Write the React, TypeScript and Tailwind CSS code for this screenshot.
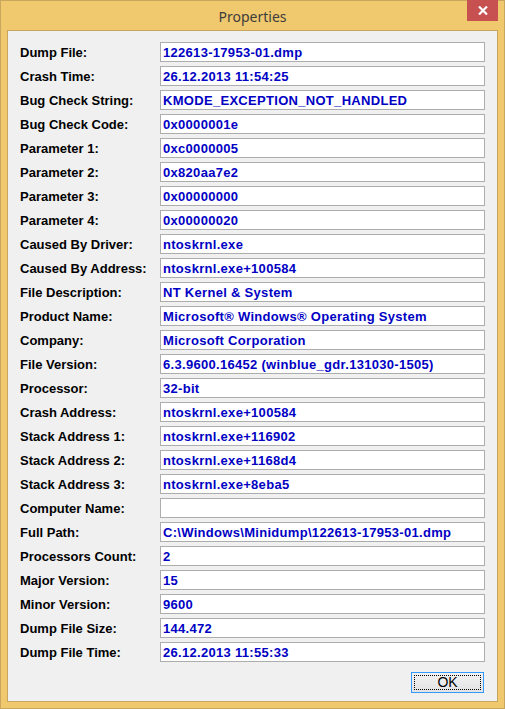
import React from 'react'

const rows: [string, string][] = [
  ['Dump File:', '122613-17953-01.dmp'],
  ['Crash Time:', '26.12.2013 11:54:25'],
  ['Bug Check String:', 'KMODE_EXCEPTION_NOT_HANDLED'],
  ['Bug Check Code:', '0x0000001e'],
  ['Parameter 1:', '0xc0000005'],
  ['Parameter 2:', '0x820aa7e2'],
  ['Parameter 3:', '0x00000000'],
  ['Parameter 4:', '0x00000020'],
  ['Caused By Driver:', 'ntoskrnl.exe'],
  ['Caused By Address:', 'ntoskrnl.exe+100584'],
  ['File Description:', 'NT Kernel & System'],
  ['Product Name:', 'Microsoft® Windows® Operating System'],
  ['Company:', 'Microsoft Corporation'],
  ['File Version:', '6.3.9600.16452 (winblue_gdr.131030-1505)'],
  ['Processor:', '32-bit'],
  ['Crash Address:', 'ntoskrnl.exe+100584'],
  ['Stack Address 1:', 'ntoskrnl.exe+116902'],
  ['Stack Address 2:', 'ntoskrnl.exe+1168d4'],
  ['Stack Address 3:', 'ntoskrnl.exe+8eba5'],
  ['Computer Name:', ''],
  ['Full Path:', 'C:\\Windows\\Minidump\\122613-17953-01.dmp'],
  ['Processors Count:', '2'],
  ['Major Version:', '15'],
  ['Minor Version:', '9600'],
  ['Dump File Size:', '144.472'],
  ['Dump File Time:', '26.12.2013 11:55:33'],
]

const PropRow: React.FC<{ label: string; value: string }> = ({ label, value }) => (
  <div className="flex h-[20px] items-center">
    <div className="w-[140px] pt-[1px] text-[13px] font-bold text-black">{label}</div>
    <div className="flex h-[20px] flex-1 items-center overflow-hidden whitespace-nowrap border border-[#adadad] bg-white pl-[2px] pt-[1px] text-[13px] font-bold tracking-[0.3px] text-[#0000c4]">
      {value}
    </div>
  </div>
)

export default function App() {
  return (
    <div
      className="flex h-[709px] w-[505px] flex-col border border-[#c9a65e] bg-[#f0c86d]"
      style={{ fontFamily: '"Liberation Sans", Arial, sans-serif' }}
    >
      {/* Title bar */}
      <div className="relative flex h-[29px] shrink-0 items-center justify-center">
        <span className="pt-[1px] text-[14px] text-[#3d3d3d]" style={{ fontFamily: '"Noto Sans", sans-serif' }}>
          Properties
        </span>
        <div className="absolute right-[6px] top-[-1px] flex h-[21px] w-[31px] items-center justify-center bg-[#c75050]">
          <svg width="10" height="9" viewBox="0 0 10 9">
            <path d="M1 0.5 L9 8.5 M9 0.5 L1 8.5" stroke="white" strokeWidth="2.2" fill="none" />
          </svg>
        </div>
      </div>

      {/* Client area */}
      <div className="mx-[6px] mb-[6px] flex flex-1 flex-col border border-[#c9a65e] bg-[#f0f0f0] pl-[12px] pr-[12px] pt-[11px]">
        <div className="flex flex-col gap-[4px]">
          {rows.map(([label, value]) => (
            <PropRow key={label} label={label} value={value} />
          ))}
        </div>
        <div className="mt-[10px] flex justify-end pr-[1px]">
          <button
            type="button"
            className="flex h-[21px] w-[73px] items-center justify-center border border-[#3399ff] bg-gradient-to-b from-[#f2f2f2] to-[#e3e3e3] p-[2px]"
          >
            <span className="flex h-full w-full items-center justify-center border border-dotted border-black text-[14px] text-black">
              OK
            </span>
          </button>
        </div>
      </div>
    </div>
  )
}
